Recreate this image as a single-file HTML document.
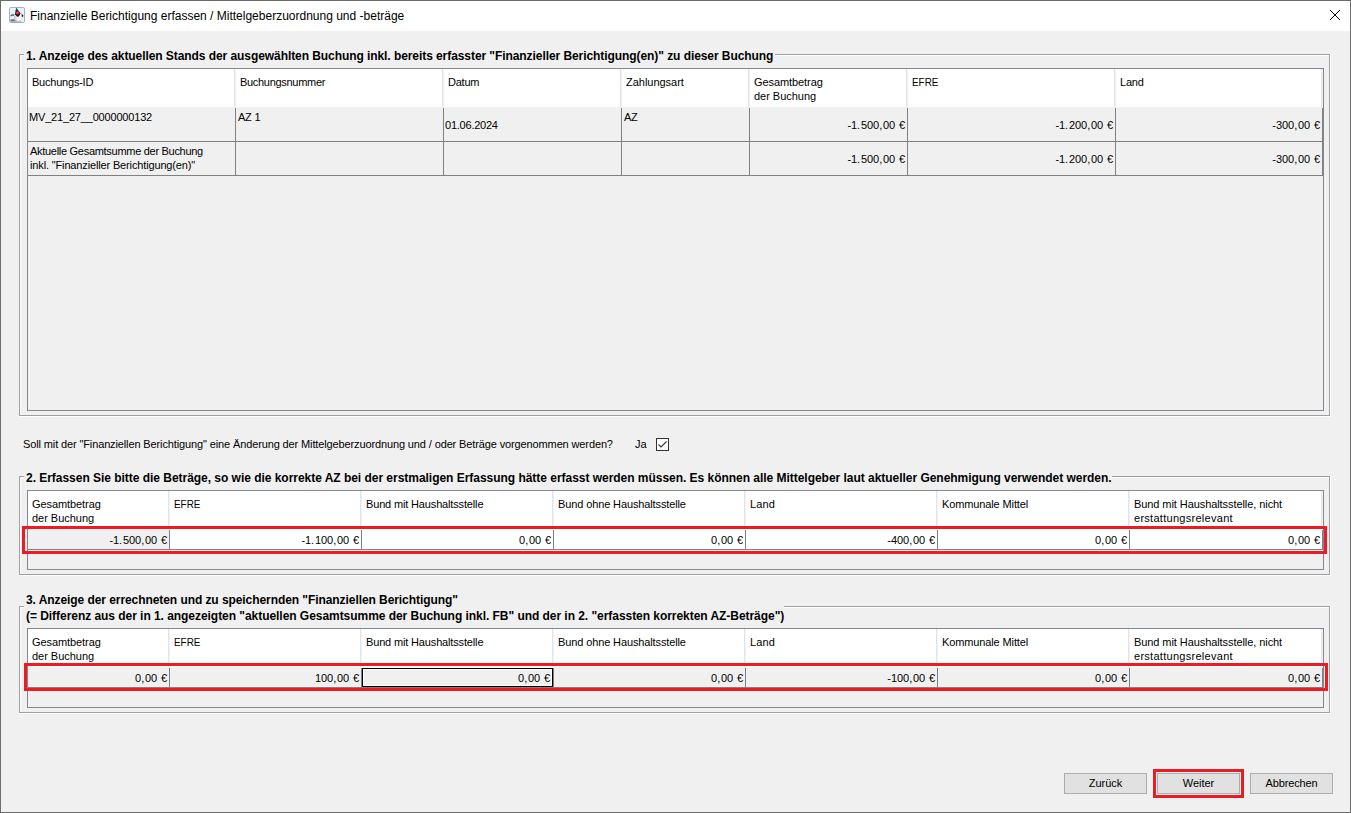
<!DOCTYPE html>
<html>
<head>
<meta charset="utf-8">
<title>Finanzielle Berichtigung erfassen</title>
<style>
html,body{margin:0;padding:0;}
body{width:1351px;height:813px;overflow:hidden;background:#f0f0f0;position:relative;
  font-family:"Liberation Sans",sans-serif;font-size:11px;color:#000;}
.abs{position:absolute;}
#win{position:absolute;left:0;top:0;width:1349px;height:811px;border:1px solid #6c6c6c;background:#f0f0f0;}
#tbar{position:absolute;left:1px;top:1px;width:1349px;height:30px;background:#fff;}
#ttext{position:absolute;left:30px;top:7px;font-size:12px;line-height:18px;white-space:nowrap;}
/* etched group box */
.grp{position:absolute;}
.grp .g{position:absolute;background:#a0a0a0;}
.grp .w{position:absolute;background:#fff;}
.gtitle{position:absolute;font-weight:bold;font-size:12px;line-height:15px;white-space:nowrap;letter-spacing:-0.07px;}
/* scroll pane */
.sp{position:absolute;border:1px solid #828790;background:#f0f0f0;box-sizing:border-box;}
.hdr{position:absolute;left:0;top:0;height:38px;background:#fff;}
.hc{position:absolute;top:0;height:38px;box-sizing:border-box;border-right:1px solid #f3f3f3;box-shadow:inset -1px 0 0 #e3e3e3;padding:6px 0 0 4px;line-height:14px;white-space:nowrap;letter-spacing:-0.22px;}
.efre{display:inline-block;transform:scaleX(0.9);transform-origin:0 0;letter-spacing:0;}
.vl{position:absolute;width:1px;background:#808080;}
.hl{position:absolute;height:1px;background:#808080;}
.cell{position:absolute;white-space:nowrap;line-height:14px;}
.r{text-align:right;letter-spacing:-0.05px;word-spacing:0.8px;}
.r i{font-style:normal;letter-spacing:0.8px;}
.l{letter-spacing:-0.23px;}
.red{position:absolute;border:3px solid #ed1c24;box-sizing:border-box;}
.btn{position:absolute;box-sizing:border-box;border:1px solid #adadad;background:#e1e1e1;height:21px;width:83px;text-align:center;font-size:11px;line-height:19px;top:773px;}
</style>
</head>
<body>
<div id="win"></div>
<div id="tbar"></div>
<!-- icon: Java Duke -->
<svg class="abs" style="left:9px;top:7px" width="16" height="16" viewBox="0 0 16 16">
  <defs>
    <radialGradient id="nose" cx="0.45" cy="0.35" r="0.7"><stop offset="0" stop-color="#ff5a5a"/><stop offset="0.6" stop-color="#f02028"/><stop offset="1" stop-color="#a00810"/></radialGradient>
    <linearGradient id="body" x1="0" y1="0" x2="1" y2="0"><stop offset="0" stop-color="#bdbdbd"/><stop offset="0.55" stop-color="#ffffff"/><stop offset="1" stop-color="#f4f4f4"/></linearGradient>
    <linearGradient id="shd" x1="0" y1="0" x2="0" y2="1"><stop offset="0" stop-color="#9a9a9a"/><stop offset="1" stop-color="#4a4a4a"/></linearGradient>
  </defs>
  <rect x="0.5" y="0.5" width="15" height="15" rx="1.2" fill="#eef0f9" stroke="#9bb1c8"/>
  <path d="M1.4 12.6 Q5 10.8 10.8 12.4 L12.4 14.2 L1.4 14.6 Z" fill="url(#shd)" opacity="0.9"/>
  <path d="M5.2 7 Q4.6 10.5 5.4 13.2 Q8.5 14.4 12.2 13.6 Q12.4 10 11.4 7.4 L9 9.6 L6.6 8.6 Z" fill="url(#body)"/>
  <path d="M7.3 0.9 Q9.6 3.6 11.6 6.6 Q10.6 8.8 9 10 Q7.2 9.2 6.1 7.2 Q6.3 3.6 7.3 0.9 Z" fill="#141a1c"/>
  <path d="M7.3 0.9 Q8.2 2.4 9.2 3.8 L7.2 4.2 Z" fill="#1f4a48"/>
  <circle cx="8.6" cy="5.9" r="1.75" fill="url(#nose)"/>
  <path d="M1.4 8.6 Q2.6 6.4 5 7.2 L5 8.8 Q3 8.4 1.8 9.6 Z" fill="#5a5a58"/>
  <circle cx="3.3" cy="7.6" r="0.9" fill="#4aa0e8"/>
  <path d="M12 6.8 Q13.8 6.2 14.4 8.4 Q14.2 9.8 13.2 9.8 Q12.4 8.4 12 6.8 Z" fill="#8c8c8c"/>
  <ellipse cx="13.5" cy="8.9" rx="0.7" ry="0.95" fill="#111"/>
</svg>
<div id="ttext">Finanzielle Berichtigung erfassen / Mittelgeberzuordnung und -beträge</div>
<svg class="abs" style="left:1329px;top:9px" width="12" height="12" viewBox="0 0 12 12"><path d="M1 1 L11 11 M11 1 L1 11" stroke="#000" stroke-width="1" fill="none"/></svg>

<!-- GROUP 1 -->
<div class="grp" id="g1">
  <div class="g" style="left:19px;top:54px;width:1px;height:362px"></div>
  <div class="w" style="left:20px;top:55px;width:1px;height:360px"></div>
  <div class="g" style="left:19px;top:415px;width:1311px;height:1px"></div>
  <div class="w" style="left:19px;top:416px;width:1312px;height:1px"></div>
  <div class="g" style="left:1329px;top:54px;width:1px;height:362px"></div>
  <div class="w" style="left:1330px;top:54px;width:1px;height:363px"></div>
  <div class="g" style="left:19px;top:54px;width:5px;height:1px"></div>
  <div class="w" style="left:20px;top:55px;width:4px;height:1px"></div>
  <div class="g" style="left:775px;top:54px;width:555px;height:1px"></div>
  <div class="w" style="left:775px;top:55px;width:554px;height:1px"></div>
</div>
<div class="gtitle" style="left:26px;top:49px">1. Anzeige des aktuellen Stands der ausgewählten Buchung inkl. bereits erfasster "Finanzieller Berichtigung(en)" zu dieser Buchung</div>

<!-- SCROLL PANE 1 : interior origin (28,69) -->
<div class="sp" style="left:27px;top:68px;width:1297px;height:343px">
  <div class="hdr" style="width:1295px">
    <div class="hc" style="left:0;width:208px">Buchungs-ID</div>
    <div class="hc" style="left:208px;width:208px"><span style="letter-spacing:-0.3px">Buchungsnummer</span></div>
    <div class="hc" style="left:416px;width:178px">Datum</div>
    <div class="hc" style="left:594px;width:128px"><span style="letter-spacing:-0.02px">Zahlungsart</span></div>
    <div class="hc" style="left:722px;width:158px"><span style="letter-spacing:-0.08px">Gesamtbetrag</span><br><span style="letter-spacing:-0.02px">der Buchung</span></div>
    <div class="hc" style="left:880px;width:208px"><span class="efre">EFRE</span></div>
    <div class="hc" style="left:1088px;width:207px">Land</div>
  </div>
  <!-- grid -->
  <div class="hl" style="left:0;top:72px;width:1295px"></div>
  <div class="hl" style="left:0;top:106px;width:1295px"></div>
  <div class="vl" style="left:207px;top:39px;height:68px"></div>
  <div class="vl" style="left:415px;top:39px;height:68px"></div>
  <div class="vl" style="left:593px;top:39px;height:68px"></div>
  <div class="vl" style="left:721px;top:39px;height:68px"></div>
  <div class="vl" style="left:879px;top:39px;height:68px"></div>
  <div class="vl" style="left:1087px;top:39px;height:68px"></div>
  <div class="vl" style="left:1294px;top:39px;height:68px"></div>
  <!-- row 1 -->
  <div class="cell" style="left:1px;top:41px;letter-spacing:-0.18px">MV_21_27__0000000132</div>
  <div class="cell l" style="left:210px;top:41px">AZ 1</div>
  <div class="cell l" style="left:417px;top:49px">01.06.2024</div>
  <div class="cell l" style="left:596px;top:41px">AZ</div>
  <div class="cell r" style="left:722px;width:155px;top:49px">-1<i>.</i>500<i>,</i>00 €</div>
  <div class="cell r" style="left:880px;width:205px;top:49px">-1<i>.</i>200<i>,</i>00 €</div>
  <div class="cell r" style="left:1088px;width:204px;top:49px">-300<i>,</i>00 €</div>
  <!-- row 2 -->
  <div class="cell l" style="left:2px;top:75px"><span style="letter-spacing:-0.29px">Aktuelle Gesamtsumme der Buchung</span><br><span style="letter-spacing:-0.145px">inkl. "Finanzieller Berichtigung(en)"</span></div>
  <div class="cell r" style="left:722px;width:155px;top:83px">-1<i>.</i>500<i>,</i>00 €</div>
  <div class="cell r" style="left:880px;width:205px;top:83px">-1<i>.</i>200<i>,</i>00 €</div>
  <div class="cell r" style="left:1088px;width:204px;top:83px">-300<i>,</i>00 €</div>
</div>

<!-- QUESTION -->
<div class="abs" style="left:23px;top:437px;line-height:14px;white-space:nowrap;letter-spacing:-0.125px">Soll mit der "Finanziellen Berichtigung" eine Änderung der Mittelgeberzuordnung und / oder Beträge vorgenommen werden?</div>
<div class="abs" style="left:635px;top:437px;line-height:14px;white-space:nowrap">Ja</div>
<div class="abs" style="left:656px;top:438px;width:11px;height:11px;border:1px solid #333;background:#fff"></div>
<svg class="abs" style="left:656px;top:438px" width="13" height="13" viewBox="0 0 13 13"><path d="M2.5 6.5 L5 9 L10.5 3.5" stroke="#333" stroke-width="1.1" fill="none"/></svg>

<!-- GROUP 2 -->
<div class="grp" id="g2">
  <div class="g" style="left:19px;top:476px;width:1px;height:99px"></div>
  <div class="w" style="left:20px;top:477px;width:1px;height:97px"></div>
  <div class="g" style="left:19px;top:574px;width:1311px;height:1px"></div>
  <div class="w" style="left:19px;top:575px;width:1312px;height:1px"></div>
  <div class="g" style="left:1329px;top:476px;width:1px;height:99px"></div>
  <div class="w" style="left:1330px;top:476px;width:1px;height:100px"></div>
  <div class="g" style="left:19px;top:476px;width:5px;height:1px"></div>
  <div class="w" style="left:20px;top:477px;width:4px;height:1px"></div>
  <div class="g" style="left:1112px;top:476px;width:218px;height:1px"></div>
  <div class="w" style="left:1112px;top:477px;width:217px;height:1px"></div>
</div>
<div class="gtitle" style="left:26px;top:471px;letter-spacing:-0.03px">2. Erfassen Sie bitte die Beträge, so wie die korrekte AZ bei der erstmaligen Erfassung hätte erfasst werden müssen. Es können alle Mittelgeber laut aktueller Genehmigung verwendet werden.</div>

<!-- SCROLL PANE 2 : interior origin (28,491) -->
<div class="sp" style="left:27px;top:490px;width:1297px;height:80px">
  <div class="hdr" style="width:1295px">
    <div class="hc" style="left:0;width:142px"><span style="letter-spacing:-0.08px">Gesamtbetrag</span><br><span style="letter-spacing:-0.02px">der Buchung</span></div>
    <div class="hc" style="left:142px;width:192px"><span class="efre">EFRE</span></div>
    <div class="hc" style="left:334px;width:192px"><span style="letter-spacing:-0.155px">Bund mit Haushaltsstelle</span></div>
    <div class="hc" style="left:526px;width:192px"><span style="letter-spacing:-0.12px">Bund ohne Haushaltsstelle</span></div>
    <div class="hc" style="left:718px;width:192px"><span style="letter-spacing:0.15px">Land</span></div>
    <div class="hc" style="left:910px;width:192px"><span style="letter-spacing:-0.12px">Kommunale Mittel</span></div>
    <div class="hc" style="left:1102px;width:193px"><span style="letter-spacing:-0.075px">Bund mit Haushaltsstelle, nicht</span><br><span style="letter-spacing:0.28px">erstattungsrelevant</span></div>
  </div>
  <div class="abs" style="left:142px;top:38px;width:1152px;height:20px;background:#fff"></div>
  <div class="hl" style="left:0;top:58px;width:1295px"></div>
  <div class="vl" style="left:141px;top:39px;height:20px"></div>
  <div class="vl" style="left:333px;top:39px;height:20px"></div>
  <div class="vl" style="left:525px;top:39px;height:20px"></div>
  <div class="vl" style="left:717px;top:39px;height:20px"></div>
  <div class="vl" style="left:909px;top:39px;height:20px"></div>
  <div class="vl" style="left:1101px;top:39px;height:20px"></div>
  <div class="vl" style="left:1294px;top:39px;height:20px"></div>
  <div class="cell r" style="left:0;width:139px;top:42px">-1<i>.</i>500<i>,</i>00 €</div>
  <div class="cell r" style="left:142px;width:189px;top:42px">-1<i>.</i>100<i>,</i>00 €</div>
  <div class="cell r" style="left:334px;width:189px;top:42px">0<i>,</i>00 €</div>
  <div class="cell r" style="left:526px;width:189px;top:42px">0<i>,</i>00 €</div>
  <div class="cell r" style="left:718px;width:189px;top:42px">-400<i>,</i>00 €</div>
  <div class="cell r" style="left:910px;width:189px;top:42px">0<i>,</i>00 €</div>
  <div class="cell r" style="left:1102px;width:190px;top:42px">0<i>,</i>00 €</div>
</div>
<div class="red" style="left:22px;top:526px;width:1305px;height:28px"></div>

<!-- GROUP 3 -->
<div class="grp" id="g3">
  <div class="g" style="left:19px;top:606px;width:1px;height:107px"></div>
  <div class="w" style="left:20px;top:607px;width:1px;height:105px"></div>
  <div class="g" style="left:19px;top:712px;width:1311px;height:1px"></div>
  <div class="w" style="left:19px;top:713px;width:1312px;height:1px"></div>
  <div class="g" style="left:1329px;top:606px;width:1px;height:107px"></div>
  <div class="w" style="left:1330px;top:606px;width:1px;height:108px"></div>
  <div class="g" style="left:19px;top:606px;width:5px;height:1px"></div>
  <div class="w" style="left:20px;top:607px;width:4px;height:1px"></div>
  <div class="g" style="left:784px;top:606px;width:546px;height:1px"></div>
  <div class="w" style="left:784px;top:607px;width:545px;height:1px"></div>
</div>
<div class="gtitle" style="left:26px;top:592px;line-height:16px">3. Anzeige der errechneten und zu speichernden "Finanziellen Berichtigung"<br><span style="letter-spacing:-0.045px">(= Differenz aus der in 1. angezeigten "aktuellen Gesamtsumme der Buchung inkl. FB" und der in 2. "erfassten korrekten AZ-Beträge")</span></div>

<!-- SCROLL PANE 3 : interior origin (28,629) -->
<div class="sp" style="left:27px;top:628px;width:1297px;height:80px">
  <div class="hdr" style="width:1295px">
    <div class="hc" style="left:0;width:142px"><span style="letter-spacing:-0.08px">Gesamtbetrag</span><br><span style="letter-spacing:-0.02px">der Buchung</span></div>
    <div class="hc" style="left:142px;width:192px"><span class="efre">EFRE</span></div>
    <div class="hc" style="left:334px;width:192px"><span style="letter-spacing:-0.155px">Bund mit Haushaltsstelle</span></div>
    <div class="hc" style="left:526px;width:192px"><span style="letter-spacing:-0.12px">Bund ohne Haushaltsstelle</span></div>
    <div class="hc" style="left:718px;width:192px"><span style="letter-spacing:0.15px">Land</span></div>
    <div class="hc" style="left:910px;width:192px"><span style="letter-spacing:-0.12px">Kommunale Mittel</span></div>
    <div class="hc" style="left:1102px;width:193px"><span style="letter-spacing:-0.075px">Bund mit Haushaltsstelle, nicht</span><br><span style="letter-spacing:0.28px">erstattungsrelevant</span></div>
  </div>
  <div class="hl" style="left:0;top:58px;width:1295px"></div>
  <div class="vl" style="left:141px;top:39px;height:20px"></div>
  <div class="vl" style="left:333px;top:39px;height:20px"></div>
  <div class="vl" style="left:525px;top:39px;height:20px"></div>
  <div class="vl" style="left:717px;top:39px;height:20px"></div>
  <div class="vl" style="left:909px;top:39px;height:20px"></div>
  <div class="vl" style="left:1101px;top:39px;height:20px"></div>
  <div class="vl" style="left:1294px;top:39px;height:20px"></div>
  <div class="abs" style="left:334px;top:38px;width:191px;height:1px;background:#fff"></div>
  <div class="abs" style="left:334px;top:39px;width:189px;height:17px;border:1px solid #000;box-shadow:inset 0 0 0 1px #fff"></div>
  <div class="cell r" style="left:0;width:139px;top:42px">0<i>,</i>00 €</div>
  <div class="cell r" style="left:142px;width:189px;top:42px">100<i>,</i>00 €</div>
  <div class="cell r" style="left:334px;width:188px;top:42px">0<i>,</i>00 €</div>
  <div class="cell r" style="left:526px;width:189px;top:42px">0<i>,</i>00 €</div>
  <div class="cell r" style="left:718px;width:189px;top:42px">-100<i>,</i>00 €</div>
  <div class="cell r" style="left:910px;width:189px;top:42px">0<i>,</i>00 €</div>
  <div class="cell r" style="left:1102px;width:190px;top:42px">0<i>,</i>00 €</div>
</div>
<div class="red" style="left:24px;top:663px;width:1304px;height:28px"></div>

<!-- BUTTONS -->
<div class="btn" style="left:1064px">Zurück</div>
<div class="btn" style="left:1157px">Weiter</div>
<div class="btn" style="left:1250px;letter-spacing:-0.15px">Abbrechen</div>
<div class="red" style="left:1153px;top:769px;width:91px;height:29px"></div>

</body>
</html>
